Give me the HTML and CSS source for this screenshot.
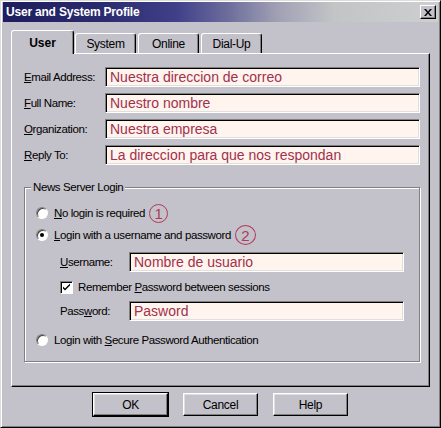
FILE: index.html
```html
<!DOCTYPE html>
<html>
<head>
<meta charset="utf-8">
<link rel="stylesheet" href="styles.css">
</head>
<body>
<div class="window">
  <div class="titlebar">
    <span class="title">User and System Profile</span>
    <span class="close"><svg width="8" height="7" viewBox="0 0 8 7"><path d="M0 0h2l2 2.5L6 0h2L5 3.5 8 7H6L4 4.5 2 7H0l3-3.5z" fill="#000"/></svg></span>
  </div>
  <div class="tabs">
    <div class="tab active">User</div>
    <div class="tab">System</div>
    <div class="tab">Online</div>
    <div class="tab">Dial-Up</div>
  </div>
  <div class="panel">
    <div class="form">
      <label class="lbl"><u>E</u>mail Address:</label>
      <div class="field">Nuestra direccion de correo</div>
      <label class="lbl"><u>F</u>ull Name:</label>
      <div class="field">Nuestro nombre</div>
      <label class="lbl"><u>O</u>rganization:</label>
      <div class="field">Nuestra empresa</div>
      <label class="lbl"><u>R</u>eply To:</label>
      <div class="field">La direccion para que nos respondan</div>
    </div>
    <fieldset class="group">
      <legend>News Server Login</legend>
      <div class="row r1"><span class="radio"></span><span class="txt"><u>N</u>o login is required</span><span class="num">1</span></div>
      <div class="row r2"><span class="radio checked"></span><span class="txt"><u>L</u>ogin with a username and password</span><span class="num n2">2</span></div>
      <div class="sub s1"><span class="sublbl"><u>U</u>sername:</span><div class="field small">Nombre de usuario</div></div>
      <div class="sub s2"><span class="check"><svg width="9" height="9" viewBox="0 0 9 9"><path d="M1 3.5l2 2 5-5v2l-5 5-2-2z" fill="#000"/></svg></span><span class="txt">Remember <u>P</u>assword between sessions</span></div>
      <div class="sub s3"><span class="sublbl">Pass<u>w</u>ord:</span><div class="field small">Pasword</div></div>
      <div class="row r3"><span class="radio"></span><span class="txt">Login with <u>S</u>ecure Password Authentication</span></div>
    </fieldset>
  </div>
  <div class="buttons">
    <button class="btn default">OK</button>
    <button class="btn">Cancel</button>
    <button class="btn">Help</button>
  </div>
</div>
</body>
</html>
```
FILE: styles.css
```css
html, body {
  margin: 0;
  padding: 0;
  background: #c3c1c9;
}
body {
  font-family: "Liberation Sans", Arial, sans-serif;
  font-size: 11.5px;
  letter-spacing: -0.4px;
  color: #000;
}
.window {
  width: 441px;
  height: 428px;
  box-sizing: border-box;
  border: 1px solid;
  border-color: #dcdcdc #000 #000 #dcdcdc;
  box-shadow: inset 1px 1px 0 #fff, inset -1px -1px 0 #808080;
  padding: 1px 2px 2px 2px;
  display: flex;
  flex-direction: column;
  background: #c3c1c9;
}
.titlebar {
  height: 20px;
  flex: none;
  display: flex;
  align-items: center;
  justify-content: space-between;
  padding: 0 2px 0 3px;
  background: linear-gradient(90deg, #1e1e5e 0%, #2a2a6e 22%, #40408a 40%, #6e6e9c 52%, #a0a0b4 63%, #c2c4c6 76%, #cdcfcf 100%);
}
.title {
  color: #fff;
  font-weight: bold;
  font-size: 12px;
  letter-spacing: -0.2px;
}
.close {
  width: 14px;
  height: 12px;
  display: flex;
  align-items: center;
  justify-content: center;
  background: #c3c1c9;
  border: 1px solid;
  border-color: #fff #000 #000 #fff;
  box-shadow: inset -1px -1px 0 #808080;
}
.tabs {
  display: flex;
  align-items: flex-end;
  height: 23px;
  margin: 8px 0 0 9px;
  position: relative;
  z-index: 1;
}
.tab {
  width: 61px;
  height: 20px;
  box-sizing: border-box;
  border: 1px solid;
  border-bottom: none;
  border-color: #fff #000 #000 #fff;
  border-radius: 3px 3px 0 0;
  box-shadow: inset -1px 0 0 #808080;
  display: flex;
  align-items: center;
  justify-content: center;
  margin-right: 2px;
  padding-top: 1px;
  font-size: 12px;
  letter-spacing: -0.3px;
}
.tab.active {
  width: 63px;
  height: 24px;
  margin: 0 1px -1px -1px;
  background: #c3c1c9;
  font-weight: bold;
  letter-spacing: 0;
  padding-top: 0;
}
.panel {
  height: 334px;
  box-sizing: border-box;
  margin-left: 8px;
  width: 419px;
  border: 1px solid;
  border-color: #fff #000 #000 #fff;
  box-shadow: inset -1px -1px 0 #808080;
  padding: 13px 9px 0 12px;
}
.form {
  display: grid;
  grid-template-columns: 81px 315px;
  grid-auto-rows: 20px;
  row-gap: 6px;
  align-items: center;
}
.field {
  height: 20px;
  box-sizing: border-box;
  border: 1px solid;
  border-color: #808080 #fff #fff #808080;
  box-shadow: inset 1px 1px 0 #000, inset -1px -1px 0 #dfdfdf;
  background: #fff4ee;
  color: #a2304c;
  font-size: 14px;
  letter-spacing: 0;
  line-height: 18px;
  padding-left: 4px;
  white-space: nowrap;
}
.field.small {
  width: 275px;
  height: 20px;
}
.group {
  margin: 15px 0 0 0;
  width: 396px;
  box-sizing: border-box;
  border: 1px solid #808080;
  box-shadow: 1px 1px 0 #fff, inset 1px 1px 0 #fff;
  padding: 9px 0 11px 11px;
  min-width: 0;
}
.group legend {
  padding: 0 2px;
  margin-left: -5px;
  line-height: 14px;
  background: #c3c1c9;
}
.row {
  display: flex;
  align-items: center;
  height: 20px;
}
.row.r2 { margin-top: 2px; }
.row.r3 { margin-top: 9px; }
.radio {
  width: 12px;
  height: 12px;
  box-sizing: border-box;
  border-radius: 50%;
  border: 1px solid;
  border-color: #808080 #fff #fff #808080;
  box-shadow: inset 1px 1px 0 #404040;
  background: #fff;
  margin-right: 6px;
  position: relative;
  flex: none;
}
.radio.checked::after {
  content: "";
  position: absolute;
  left: 3px;
  top: 3px;
  width: 4px;
  height: 4px;
  border-radius: 50%;
  background: #000;
}
.num {
  width: 19px;
  height: 19px;
  box-sizing: border-box;
  border: 1.5px solid #b03a56;
  border-radius: 50%;
  color: #b03a56;
  font-size: 15px;
  letter-spacing: 0;
  display: inline-flex;
  align-items: center;
  justify-content: center;
  margin-left: 4px;
}
.num.n2 {
  width: 21px;
  height: 20px;
}
.sub {
  display: flex;
  align-items: center;
  margin-left: 24px;
}
.s1 { margin-top: 7px; }
.s2 { margin-top: 7px; height: 16px; }
.s3 { margin-top: 6px; }
.sublbl {
  width: 69px;
  flex: none;
}
.check {
  width: 13px;
  height: 13px;
  box-sizing: border-box;
  border: 1px solid;
  border-color: #808080 #fff #fff #808080;
  box-shadow: inset 1px 1px 0 #000;
  background: #fff;
  display: flex;
  align-items: center;
  justify-content: center;
  margin-right: 5px;
  flex: none;
}
.buttons {
  display: flex;
  justify-content: center;
  gap: 15px;
  margin-top: 6px;
}
.btn {
  width: 75px;
  height: 23px;
  box-sizing: border-box;
  border: 1px solid;
  border-color: #fff #000 #000 #fff;
  box-shadow: inset -1px -1px 0 #808080, inset 1px 1px 0 #dfdfdf;
  background: #c3c1c9;
  font-family: "Liberation Sans", Arial, sans-serif;
  font-size: 12px;
  letter-spacing: -0.3px;
  padding: 0;
  color: #000;
}
.btn.default {
  outline: 1px solid #000;
}
```
